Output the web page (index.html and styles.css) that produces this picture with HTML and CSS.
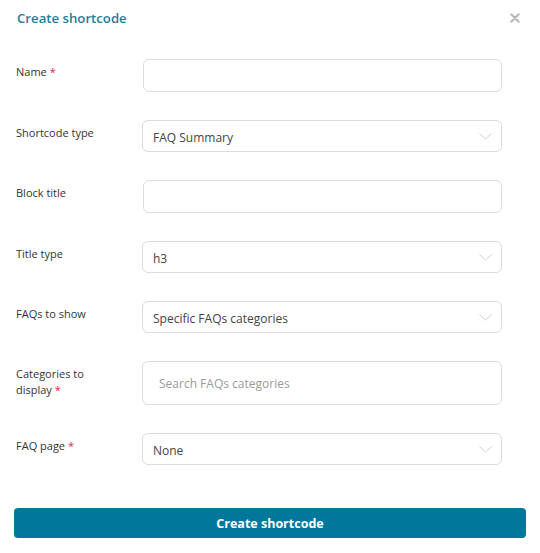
FILE: index.html
```html
<!DOCTYPE html>
<html lang="en">
<head>
    <meta charset="UTF-8">
    <meta name="viewport" content="width=device-width, initial-scale=1.0">
    <title>Create shortcode</title>
    <link rel="stylesheet" href="styles.css">
</head>
<body>
    <div class="modal">
        <!-- header -->
        <div class="modal-header">
            <h2>Create shortcode</h2>
            <svg class="close" width="10" height="10" viewBox="0 0 10 10"><path d="M1.5 1.5 L8.5 8.5 M8.5 1.5 L1.5 8.5" stroke="#b8b8b8" stroke-width="2.4" stroke-linecap="round"/></svg>
        </div>

        <div class="form-container">
            <div class="row">
                <label for="name">Name <span class="req">*</span></label>
                <input type="text" id="name" class="field">
            </div>

            <div class="row">
                <label>Shortcode type</label>
                <div class="select">
                    <span>FAQ Summary</span>
                    <svg width="13" height="7" viewBox="0 0 13 7"><path d="M0.5 0.5 L6.5 6 L12.5 0.5" fill="none" stroke="#cfcfcf" stroke-width="1"/></svg>
                </div>
            </div>

            <div class="row">
                <label for="blockTitle">Block title</label>
                <input type="text" id="blockTitle" class="field">
            </div>

            <div class="row">
                <label>Title type</label>
                <div class="select">
                    <span>h3</span>
                    <svg width="13" height="7" viewBox="0 0 13 7"><path d="M0.5 0.5 L6.5 6 L12.5 0.5" fill="none" stroke="#cfcfcf" stroke-width="1"/></svg>
                </div>
            </div>

            <div class="row">
                <label>FAQs to show</label>
                <div class="select">
                    <span>Specific FAQs categories</span>
                    <svg width="13" height="7" viewBox="0 0 13 7"><path d="M0.5 0.5 L6.5 6 L12.5 0.5" fill="none" stroke="#cfcfcf" stroke-width="1"/></svg>
                </div>
            </div>

            <div class="row">
                <label for="cats">Categories to<br>display <span class="req">*</span></label>
                <input type="text" id="cats" class="field search" placeholder="Search FAQs categories">
            </div>

            <div class="row">
                <label>FAQ page <span class="req">*</span></label>
                <div class="select">
                    <span>None</span>
                    <svg width="13" height="7" viewBox="0 0 13 7"><path d="M0.5 0.5 L6.5 6 L12.5 0.5" fill="none" stroke="#cfcfcf" stroke-width="1"/></svg>
                </div>
            </div>
        </div>

        <div class="footer">
            <button>Create shortcode</button>
        </div>
    </div>
</body>
</html>
```

FILE: styles.css
```css
body {
    margin: 0;
    font-family: "Open Sans", Arial, sans-serif;
    background-color: #fff;
    color: #333;
}
.modal {
    width: 540px;
}
.modal-header {
    display: flex;
    justify-content: space-between;
    align-items: center;
    padding: 8px 20px 0 17px;
    height: 20px;
}
.modal-header h2 {
    margin: 0;
    font-size: 13.2px;
    font-weight: 600;
    color: #1f7d96;
}
.form-container {
    padding: 31px 38px 0 16px;
    display: flex;
    flex-direction: column;
    gap: 28px;
}
.row {
    display: grid;
    grid-template-columns: 127px 1fr;
    align-items: start;
}
.row label {
    font-size: 11px;
    line-height: 16px;
    padding-top: 5px;
    color: #333;
}
.req {
    color: #e2264d;
}
.field {
    box-sizing: border-box;
    height: 33px;
    margin: 0;
    border: 1px solid #dcdcdc;
    border-radius: 6px;
    padding: 0 10px;
    font-family: inherit;
    font-size: 12px;
    outline: none;
}
.field.search {
    height: 44px;
    padding: 0 16px;
    margin-left: -1px;
}
.field.search::placeholder {
    color: #9a9a9a;
}
.select {
    box-sizing: border-box;
    height: 32px;
    margin-left: -1px;
    border: 1px solid #dcdcdc;
    border-radius: 6px;
    padding: 0 9px 0 10px;
    display: flex;
    justify-content: space-between;
    align-items: center;
    font-size: 12px;
    color: #444;
}
.select span {
    padding-top: 2px;
}
.footer {
    padding: 43px 14px 0 14px;
}
.footer button {
    width: 100%;
    height: 30px;
    border: none;
    border-radius: 4px;
    background-color: #00789c;
    color: #fff;
    font-family: inherit;
    font-size: 12.5px;
    font-weight: bold;
}
```
